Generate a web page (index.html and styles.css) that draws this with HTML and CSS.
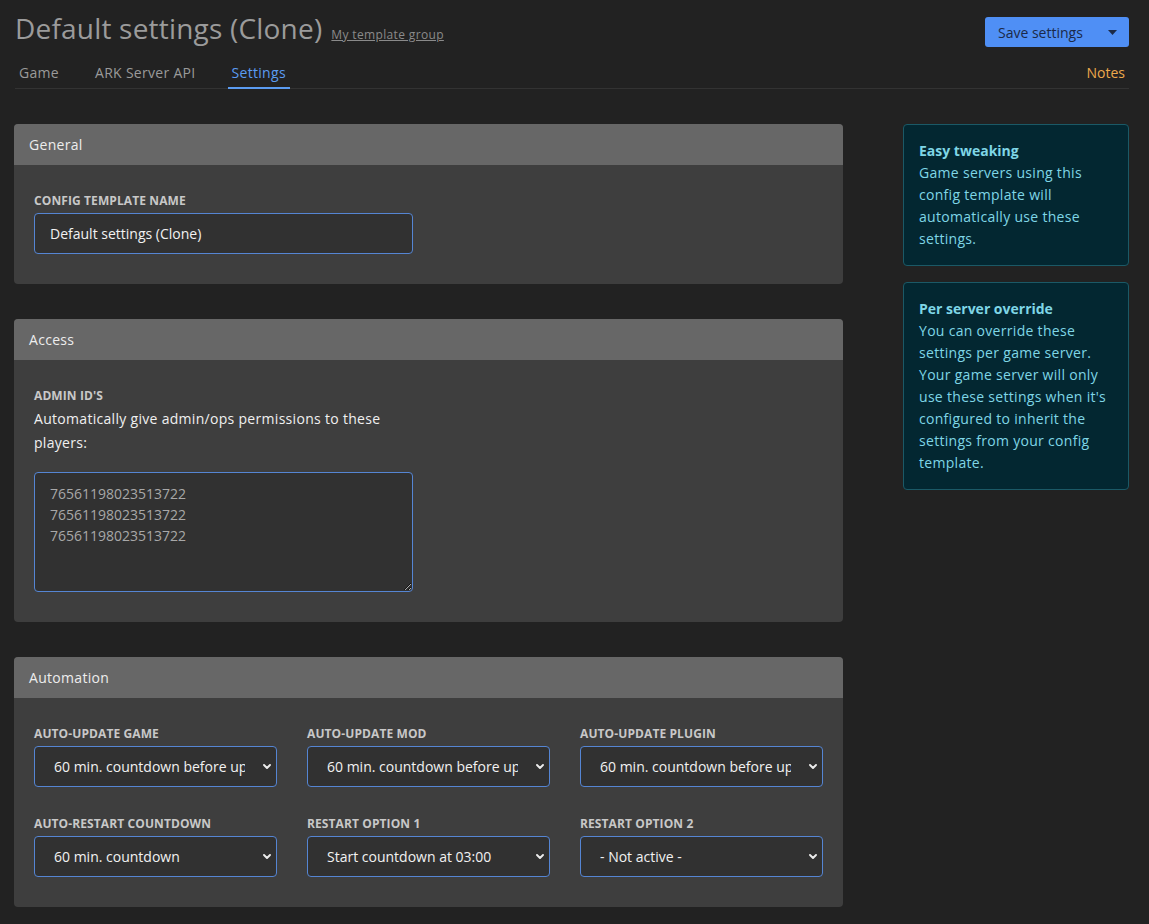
FILE: index.html
```html
<!DOCTYPE html>
<html lang="en">
<head>
<meta charset="utf-8">
<title>Default settings (Clone)</title>
<link rel="stylesheet" href="styles.css">
</head>
<body>
<div class="page">
  <div class="title-row">
    <div class="title">
      <h1>Default settings (Clone)</h1>
      <a class="group-link" href="#">My template group</a>
    </div>
    <button class="save-btn" type="button">
      <span>Save settings</span>
      <svg class="caret" width="9" height="5" viewBox="0 0 9 5"><path d="M0 0h9L4.5 5z" fill="#1b2a48"/></svg>
    </button>
  </div>
  <nav class="tabs">
    <a class="tab" href="#">Game</a>
    <a class="tab" href="#">ARK Server API</a>
    <a class="tab active" href="#">Settings</a>
    <a class="tab notes" href="#">Notes</a>
  </nav>

  <div class="layout">
    <div class="main">
      <section class="card">
        <div class="card-head">General</div>
        <div class="card-body">
          <div class="field narrow">
            <label class="label">Config template name</label>
            <input class="control" type="text" value="Default settings (Clone)">
          </div>
        </div>
      </section>

      <section class="card">
        <div class="card-head">Access</div>
        <div class="card-body">
          <div class="field narrow">
            <label class="label">Admin ID's</label>
            <p class="desc">Automatically give admin/ops permissions to these players:</p>
            <textarea class="control area">76561198023513722
76561198023513722
76561198023513722</textarea>
          </div>
        </div>
      </section>

      <section class="card">
        <div class="card-head">Automation</div>
        <div class="card-body">
          <div class="grid3">
            <div class="field">
              <label class="label">Auto-update game</label>
              <div class="control select" role="combobox">
                <span class="value">60 min. countdown before update</span>
                <svg class="chev" width="8" height="5" viewBox="0 0 8 5"><path d="M1 1L4 4 7 1" fill="none" stroke="#ececec" stroke-width="1.9" stroke-linecap="round" stroke-linejoin="round"/></svg>
              </div>
            </div>
            <div class="field">
              <label class="label">Auto-update mod</label>
              <div class="control select" role="combobox">
                <span class="value">60 min. countdown before update</span>
                <svg class="chev" width="8" height="5" viewBox="0 0 8 5"><path d="M1 1L4 4 7 1" fill="none" stroke="#ececec" stroke-width="1.9" stroke-linecap="round" stroke-linejoin="round"/></svg>
              </div>
            </div>
            <div class="field">
              <label class="label">Auto-update plugin</label>
              <div class="control select" role="combobox">
                <span class="value">60 min. countdown before update</span>
                <svg class="chev" width="8" height="5" viewBox="0 0 8 5"><path d="M1 1L4 4 7 1" fill="none" stroke="#ececec" stroke-width="1.9" stroke-linecap="round" stroke-linejoin="round"/></svg>
              </div>
            </div>
            <div class="field">
              <label class="label">Auto-restart countdown</label>
              <div class="control select" role="combobox">
                <span class="value">60 min. countdown</span>
                <svg class="chev" width="8" height="5" viewBox="0 0 8 5"><path d="M1 1L4 4 7 1" fill="none" stroke="#ececec" stroke-width="1.9" stroke-linecap="round" stroke-linejoin="round"/></svg>
              </div>
            </div>
            <div class="field">
              <label class="label">Restart option 1</label>
              <div class="control select" role="combobox">
                <span class="value">Start countdown at 03:00</span>
                <svg class="chev" width="8" height="5" viewBox="0 0 8 5"><path d="M1 1L4 4 7 1" fill="none" stroke="#ececec" stroke-width="1.9" stroke-linecap="round" stroke-linejoin="round"/></svg>
              </div>
            </div>
            <div class="field">
              <label class="label">Restart option 2</label>
              <div class="control select" role="combobox">
                <span class="value">- Not active -</span>
                <svg class="chev" width="8" height="5" viewBox="0 0 8 5"><path d="M1 1L4 4 7 1" fill="none" stroke="#ececec" stroke-width="1.9" stroke-linecap="round" stroke-linejoin="round"/></svg>
              </div>
            </div>
          </div>
        </div>
      </section>
    </div>

    <aside class="side">
      <div class="info">
        <strong>Easy tweaking</strong>
        Game servers using this config template will automatically use these settings.
      </div>
      <div class="info">
        <strong>Per server override</strong>
        You can override these settings per game server. Your game server will only use these settings when it's configured to inherit the settings from your config template.
      </div>
    </aside>
  </div>
</div>
</body>
</html>
```
FILE: styles.css
```css
* { box-sizing: border-box; }
html, body {
  margin: 0;
  background: #222222;
  font-family: "Open Sans", "Noto Sans", "DejaVu Sans", sans-serif;
  font-size: 14px;
  color: #e6e6e6;
}
.page {
  padding: 0 20px 17px 14px;
}
.title-row {
  display: flex;
  justify-content: space-between;
  align-items: flex-start;
  padding-left: 1px;
}
.title {
  display: flex;
  align-items: baseline;
  gap: 9px;
  padding-top: 9px;
}
.title h1 {
  margin: 0;
  font-size: 28px;
  line-height: 38px;
  font-weight: 400;
  letter-spacing: 0.2px;
  color: #9b9b9b;
}
.group-link {
  font-size: 12px;
  letter-spacing: 0.35px;
  color: #8a8a8a;
  text-decoration: underline;
}
.save-btn {
  margin-top: 17px;
  height: 30px;
  width: 144px;
  padding: 0 12px 0 13px;
  border: 0;
  border-radius: 3px;
  background: #4f8ff5;
  color: #1b2a48;
  font-family: inherit;
  font-size: 14px;
  display: flex;
  align-items: center;
  justify-content: space-between;
}
.caret { display: block; }
.tabs {
  display: flex;
  margin-top: 15px;
  margin-left: 1px;
  border-bottom: 1px solid #333333;
}
.tab {
  padding: 0 4px 3px;
  margin-right: 28px;
  line-height: 22px;
  letter-spacing: 0.3px;
  color: #9a9a9a;
  text-decoration: none;
  border-bottom: 2px solid transparent;
  margin-bottom: -1px;
}
.tab.active {
  color: #5b9cf2;
  border-bottom-color: #5b9cf2;
}
.tab.notes {
  margin-left: auto;
  margin-right: 0;
  letter-spacing: 0;
  color: #eda94c;
  border-bottom-color: transparent;
}
.layout {
  display: grid;
  grid-template-columns: 829px 226px;
  column-gap: 60px;
  margin-top: 35px;
  align-items: start;
}
.main {
  display: flex;
  flex-direction: column;
  gap: 35px;
}
.card {
  border-radius: 4px;
  overflow: hidden;
  background: #3e3e3e;
}
.card-head {
  height: 41px;
  line-height: 41px;
  padding: 0 15px;
  background: #676767;
  color: #ededed;
  font-size: 14px;
  letter-spacing: 0.3px;
}
.card-body {
  padding: 28px 20px 30px;
}
.field { min-width: 0; }
.field.narrow { width: 379px; }
.label {
  display: block;
  font-size: 12px;
  line-height: 16px;
  font-weight: 700;
  letter-spacing: 0.1px;
  text-transform: uppercase;
  color: #c8c8c8;
  margin-bottom: 4px;
}
.desc {
  margin: -1px 0 17px;
  line-height: 24px;
  font-size: 14px;
  letter-spacing: 0.3px;
  color: #f0f0f0;
}
.control {
  display: block;
  width: 100%;
  height: 41px;
  padding: 9px 15px;
  border: 1px solid #5585d3;
  border-radius: 4px;
  background: #313131;
  color: #f2f2f2;
  font-family: inherit;
  font-size: 14px;
  line-height: 21px;
  outline: none;
}
.area {
  height: 120px;
  padding-top: 10px;
  color: #a8a8a8;
  resize: vertical;
}
.grid3 {
  display: grid;
  grid-template-columns: repeat(3, minmax(0, 1fr));
  column-gap: 30px;
  row-gap: 29px;
}
.select {
  display: flex;
  align-items: center;
  padding: 0 5px 0 19px;
}
.value {
  flex: 1;
  min-width: 0;
  overflow: hidden;
  white-space: nowrap;
  margin-right: 18px;
}
.chev {
  flex: none;
  display: block;
}
.side {
  display: flex;
  flex-direction: column;
  gap: 16px;
}
.info {
  background: #032731;
  border: 1px solid #1b5966;
  border-radius: 4px;
  padding: 15px 15px;
  color: #7fd6e6;
  line-height: 22px;
  font-size: 14px;
  letter-spacing: 0.3px;
}
.info strong {
  display: block;
  font-weight: 700;
  letter-spacing: 0;
}
```
